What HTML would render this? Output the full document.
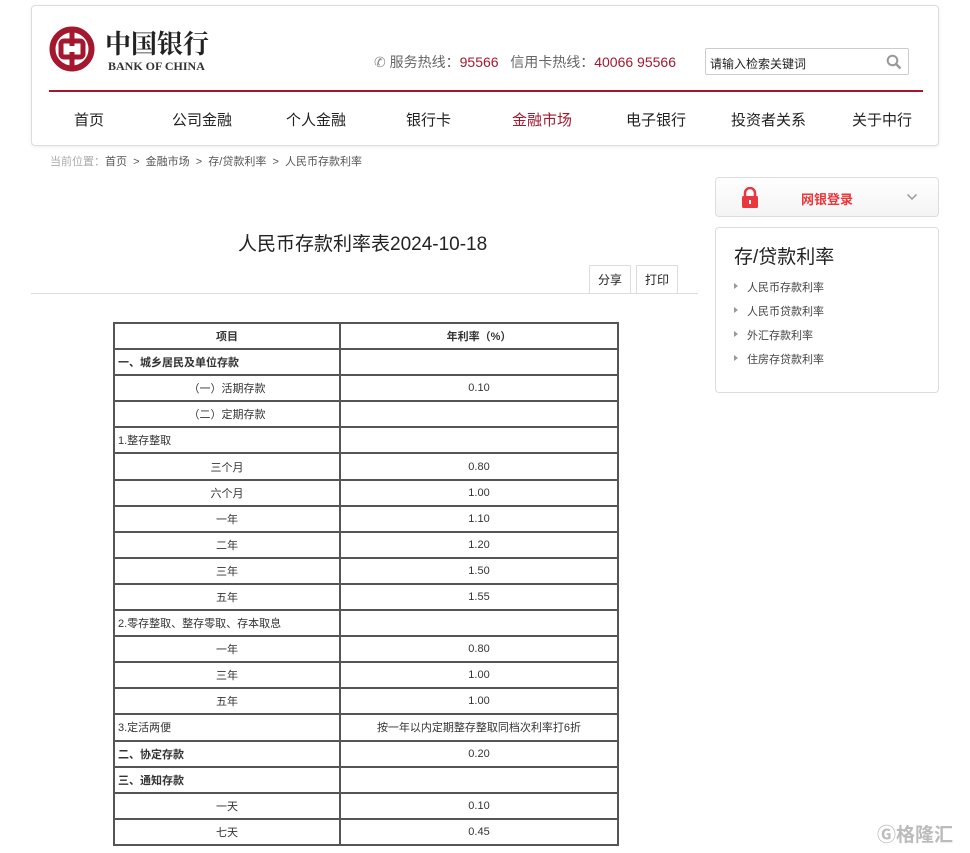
<!DOCTYPE html>
<html><head><meta charset="utf-8"><style>
*{margin:0;padding:0;box-sizing:border-box}
body{width:970px;height:853px;background:#fff;font-family:"Liberation Sans","Noto Sans CJK SC",sans-serif;position:relative;overflow:hidden;color:#333}
.hdr{position:absolute;left:31px;top:5px;width:908px;height:141px;border:1px solid #ddd;border-radius:4px;box-shadow:0 1px 3px rgba(0,0,0,.08)}
.redline{position:absolute;left:17px;top:84px;width:874px;height:2px;background:#a3182e}
.nav{position:absolute;top:103px;font-size:15px;color:#222}
.abs{position:absolute}
table{border-collapse:collapse;position:absolute;left:113px;top:322px;width:506px;font-size:11px;color:#333}
td{border:2px solid #555;height:26.1px;padding:0 3px}
td:first-child{width:226px}
td.c{text-align:center}
.side a{display:block;font-size:11px;color:#444;height:24px;padding-left:31px;position:relative}
.side a:before{content:"";position:absolute;left:18px;top:4px;border-left:4px solid #999;border-top:3px solid transparent;border-bottom:3px solid transparent}
</style></head><body>
<div class="hdr">
 <svg class="abs" style="left:17px;top:20px" width="46" height="46" viewBox="0 0 46 46"><circle cx="23" cy="23" r="19.5" fill="none" stroke="#a3182e" stroke-width="6"/><rect x="12" y="15" width="22" height="16" rx="3" fill="none" stroke="#a3182e" stroke-width="5"/><rect x="20.5" y="3" width="5" height="40" fill="#a3182e"/><rect x="17" y="20" width="12" height="6" fill="#fff"/></svg>
 <div class="abs" style="left:73px;top:18px;font-size:26px;font-weight:bold;color:#222;font-family:'Noto Serif CJK SC',serif;letter-spacing:0px">中国银行</div>
 <div class="abs" style="left:76px;top:53px;font-size:12px;font-weight:bold;font-family:'Liberation Serif',serif;color:#333">BANK OF CHINA</div>
 <div class="abs" style="left:342px;top:46px;font-size:14px;color:#666"><span style="color:#888">&#9990;</span> 服务热线：<span style="color:#a3182e">95566</span>&nbsp;&nbsp;&nbsp;信用卡热线：<span style="color:#a3182e">40066 95566</span></div>
 <div class="abs" style="left:673px;top:42px;width:204px;height:27px;border:1px solid #ccc;border-radius:2px;font-size:12px;color:#222;padding:6px 4px">请输入检索关键词</div>
 <svg class="abs" style="left:854px;top:48px" width="16" height="16" viewBox="0 0 16 16"><circle cx="6.5" cy="6.5" r="4.8" fill="none" stroke="#999" stroke-width="2"/><path d="M10 10l4.5 4.5" stroke="#999" stroke-width="2.4"/></svg>
 <div class="redline"></div>
 <div class="nav" style="left:42px">首页</div>
 <div class="nav" style="left:140px">公司金融</div>
 <div class="nav" style="left:254px">个人金融</div>
 <div class="nav" style="left:374px">银行卡</div>
 <div class="nav" style="left:480px;color:#a3182e">金融市场</div>
 <div class="nav" style="left:594px">电子银行</div>
 <div class="nav" style="left:699px">投资者关系</div>
 <div class="nav" style="left:820px">关于中行</div>
</div>
<div class="abs" style="left:50px;top:153px;font-size:11px;color:#555"><span style="color:#aaa">当前位置：</span>首页 &nbsp;&gt;&nbsp; 金融市场 &nbsp;&gt;&nbsp; 存/贷款利率 &nbsp;&gt;&nbsp; 人民币存款利率</div>
<div class="abs" style="left:238px;top:229px;font-size:19px;color:#222">人民币存款利率表2024-10-18</div>
<div class="abs" style="left:589px;top:265px;width:42px;height:29px;border:1px solid #ddd;border-bottom:none;font-size:12px;text-align:center;line-height:28px;color:#222">分享</div>
<div class="abs" style="left:636px;top:265px;width:42px;height:29px;border:1px solid #ddd;border-bottom:none;font-size:12px;text-align:center;line-height:28px;color:#222">打印</div>
<div class="abs" style="left:31px;top:293px;width:667px;height:1px;background:#ddd"></div>
<table>
<tr><td class="c"><b>项目</b></td><td class="c"><b>年利率（%）</b></td></tr>
<tr><td><b>一、城乡居民及单位存款</b></td><td></td></tr>
<tr><td class="c">（一）活期存款</td><td class="c">0.10</td></tr>
<tr><td class="c">（二）定期存款</td><td></td></tr>
<tr><td>1.整存整取</td><td></td></tr>
<tr><td class="c">三个月</td><td class="c">0.80</td></tr>
<tr><td class="c">六个月</td><td class="c">1.00</td></tr>
<tr><td class="c">一年</td><td class="c">1.10</td></tr>
<tr><td class="c">二年</td><td class="c">1.20</td></tr>
<tr><td class="c">三年</td><td class="c">1.50</td></tr>
<tr><td class="c">五年</td><td class="c">1.55</td></tr>
<tr><td>2.零存整取、整存零取、存本取息</td><td></td></tr>
<tr><td class="c">一年</td><td class="c">0.80</td></tr>
<tr><td class="c">三年</td><td class="c">1.00</td></tr>
<tr><td class="c">五年</td><td class="c">1.00</td></tr>
<tr><td>3.定活两便</td><td class="c">按一年以内定期整存整取同档次利率打6折</td></tr>
<tr><td><b>二、协定存款</b></td><td class="c">0.20</td></tr>
<tr><td><b>三、通知存款</b></td><td></td></tr>
<tr><td class="c">一天</td><td class="c">0.10</td></tr>
<tr><td class="c">七天</td><td class="c">0.45</td></tr>
</table>
<div class="abs" style="left:715px;top:177px;width:224px;height:40px;border:1px solid #ddd;border-radius:4px;background:linear-gradient(#fff,#f4f4f4)">
 <svg class="abs" style="left:25px;top:9px" width="18" height="21" viewBox="0 0 18 21"><path d="M4 9V6a5 5 0 0 1 10 0v3" fill="none" stroke="#e8383d" stroke-width="2.5"/><rect x="1" y="9" width="16" height="12" rx="1.5" fill="#e8383d"/><rect x="8" y="13" width="2" height="4" fill="#fff"/></svg>
 <div class="abs" style="left:85px;top:11px;font-size:13px;font-weight:bold;color:#e8383d">网银登录</div>
 <svg class="abs" style="left:190px;top:15px" width="12" height="8" viewBox="0 0 12 8"><path d="M1.5 1.5l4.5 4.5 4.5-4.5" fill="none" stroke="#999" stroke-width="1.5"/></svg>
</div>
<div class="abs side" style="left:715px;top:227px;width:224px;height:166px;border:1px solid #ddd;border-radius:4px">
 <div style="font-size:19px;color:#222;margin:14px 0 10px 18px">存/贷款利率</div>
 <a>人民币存款利率</a><a>人民币贷款利率</a><a>外汇存款利率</a><a>住房存贷款利率</a>
</div>
<div class="abs" style="left:877px;top:820px;font-size:19px;color:#bbb;font-weight:bold">Ⓖ格隆汇</div>
</body></html>
